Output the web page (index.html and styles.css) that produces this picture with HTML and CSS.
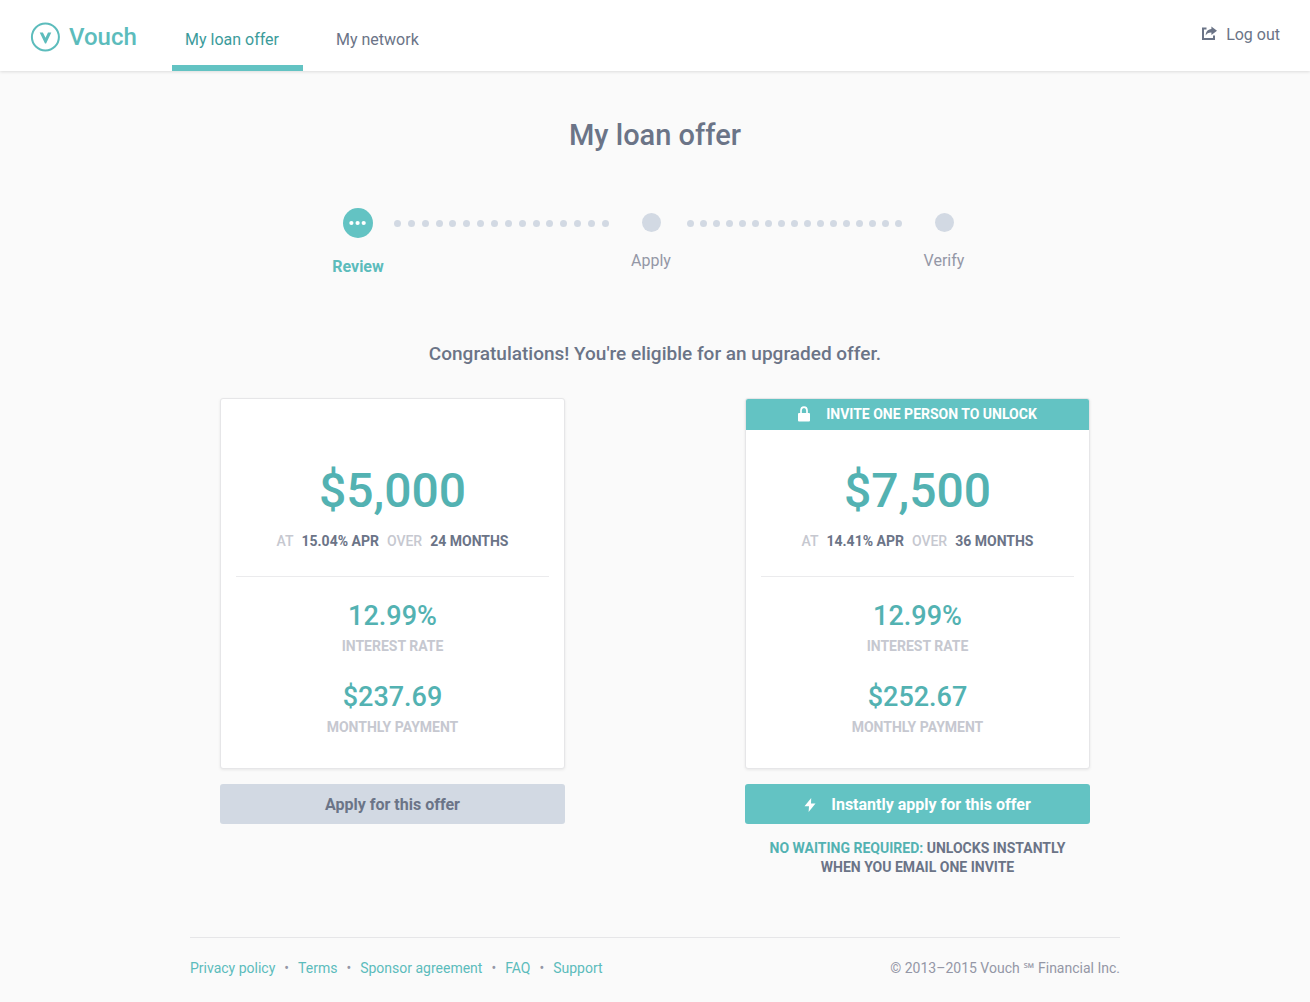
FILE: index.html
```html
<!DOCTYPE html>
<html lang="en">
<head>
<meta charset="utf-8">
<title>Vouch – My loan offer</title>
<meta name="viewport" content="width=device-width, initial-scale=1">
<link rel="stylesheet" href="styles.css">
</head>
<body>
<header class="topbar">
  <a class="brand" href="#">
    <svg class="brand-mark" viewBox="0 0 30 30" aria-hidden="true"><circle cx="15.4" cy="15" r="13.5" fill="none" stroke="currentColor" stroke-width="2"/><path d="M9.7 10.6 H12.9 L15.5 15.8 L18 10.6 H21.3 L16.1 21.5 H15 Z" fill="currentColor"/></svg>
    <span>Vouch</span>
  </a>
  <nav class="tabs">
    <a class="tab tab-active" href="#" aria-current="page">My loan offer</a>
    <a class="tab" href="#">My network</a>
  </nav>
  <a class="logout" href="#">
    <svg class="logout-icon" viewBox="0 0 16 16" aria-hidden="true"><path d="M5.5 3.5 H2 V14 H13 V10.5" fill="none" stroke="currentColor" stroke-width="2"/><path d="M10.4 1.5 L16 5.7 L10.4 9.9 V7.5 C7.6 7.4 5.8 8.5 4.7 10.5 C4.7 6.8 6.6 4.2 10.4 3.9 Z" fill="currentColor"/></svg>
    <span>Log out</span>
  </a>
</header>

<main class="page">
  <h1 class="title">My loan offer</h1>

  <ol class="steps">
    <li class="step step-current" aria-current="step">
      <svg class="step-icon" viewBox="0 0 30 30" aria-hidden="true"><circle cx="15" cy="15" r="15" fill="currentColor"/><g fill="#fff"><circle cx="8.4" cy="15" r="2.1"/><circle cx="14.6" cy="15" r="2.1"/><circle cx="20.7" cy="15" r="2.1"/></g></svg>
      <span>Review</span>
    </li>
    <li class="dots" aria-hidden="true"><i></i><i></i><i></i><i></i><i></i><i></i><i></i><i></i><i></i><i></i><i></i><i></i><i></i><i></i><i></i><i></i></li>
    <li class="step">
      <span class="step-dot"></span>
      <span>Apply</span>
    </li>
    <li class="dots" aria-hidden="true"><i></i><i></i><i></i><i></i><i></i><i></i><i></i><i></i><i></i><i></i><i></i><i></i><i></i><i></i><i></i><i></i><i></i></li>
    <li class="step">
      <span class="step-dot"></span>
      <span>Verify</span>
    </li>
  </ol>

  <h2 class="headline">Congratulations! You're eligible for an upgraded offer.</h2>

  <div class="offers">
    <section class="offer">
      <div class="card">
        <div class="ribbon"></div>
        <div class="card-body">
          <p class="amount">$5,000</p>
          <p class="terms"><span>AT</span> <b>15.04% APR</b> <span>OVER</span> <b>24 MONTHS</b></p>
          <hr class="rule">
          <p class="figure">12.99%</p>
          <p class="caption">INTEREST RATE</p>
          <p class="figure">$237.69</p>
          <p class="caption">MONTHLY PAYMENT</p>
        </div>
      </div>
      <button class="button" type="button">Apply for this offer</button>
    </section>

    <section class="offer">
      <div class="card">
        <div class="ribbon ribbon-locked">
          <svg class="lock-icon" viewBox="0 0 12 16" aria-hidden="true"><path d="M3 7.5 V4.6 A3 3.4 0 0 1 9 4.6 V7.5" fill="none" stroke="currentColor" stroke-width="1.7"/><rect x="0" y="7" width="12" height="8.5" rx="1" fill="currentColor"/></svg>
          <span>INVITE ONE PERSON TO UNLOCK</span>
        </div>
        <div class="card-body">
          <p class="amount">$7,500</p>
          <p class="terms"><span>AT</span> <b>14.41% APR</b> <span>OVER</span> <b>36 MONTHS</b></p>
          <hr class="rule">
          <p class="figure">12.99%</p>
          <p class="caption">INTEREST RATE</p>
          <p class="figure">$252.67</p>
          <p class="caption">MONTHLY PAYMENT</p>
        </div>
      </div>
      <button class="button button-primary" type="button">
        <svg class="bolt-icon" viewBox="0 0 12 16" aria-hidden="true"><path d="M7.2 1 L0.5 9.2 H5 L4.6 15 L11.5 6.6 H7 Z" fill="currentColor"/></svg>
        <span>Instantly apply for this offer</span>
      </button>
      <p class="note"><em>NO WAITING REQUIRED:</em> <span>UNLOCKS INSTANTLY</span> <span>WHEN YOU EMAIL ONE INVITE</span></p>
    </section>
  </div>

  <footer class="footer">
    <ul class="links">
      <li><a href="#">Privacy policy</a></li>
      <li><a href="#">Terms</a></li>
      <li><a href="#">Sponsor agreement</a></li>
      <li><a href="#">FAQ</a></li>
      <li><a href="#">Support</a></li>
    </ul>
    <p class="legal">© 2013–2015 Vouch ℠ Financial Inc.</p>
  </footer>
</main>
</body>
</html>
```

FILE: styles.css
```css
* {
  box-sizing: border-box;
}

body,
h1,
h2,
p,
ol,
ul {
  margin: 0;
  padding: 0;
}

body {
  background: #fafafa;
  color: #6b7487;
  font: 16px/20px Roboto, "Noto Sans", sans-serif;
}

a {
  color: inherit;
  text-decoration: none;
}

ol,
ul {
  list-style: none;
}

.topbar {
  display: flex;
  height: 71px;
  padding: 0 30px;
  background: #fff;
  box-shadow: 0 1px 3px rgba(0, 0, 0, 0.12);
}

.brand {
  display: flex;
  align-items: center;
  gap: 9px;
  width: 142px;
  padding-top: 3px;
  color: #5cbcbc;
  font-size: 24px;
  font-weight: 500;
}

.brand-mark {
  width: 30px;
  height: 30px;
}

.tabs {
  display: flex;
  gap: 20px;
}

.tab {
  padding: 30px 13px 0;
  border-bottom: 6px solid transparent;
}

.tab-active {
  min-width: 131px;
  border-color: #63c3c3;
  color: #3b9b9b;
}

.logout {
  display: flex;
  gap: 9px;
  margin-left: auto;
  padding-top: 25px;
}

.logout-icon {
  width: 16px;
  height: 16px;
}

.page {
  max-width: 930px;
  margin: 0 auto;
}

.title {
  padding-top: 44px;
  font-size: 29px;
  font-weight: 500;
  line-height: 40px;
  text-align: center;
}

.steps {
  display: flex;
  align-items: flex-start;
  max-width: 648px;
  margin: 53px auto 0;
  padding-right: 8px;
}

.step {
  display: flex;
  flex-direction: column;
  align-items: center;
  gap: 19px;
  width: 54px;
  padding-top: 5px;
  color: #9497a6;
}

.step-current {
  padding-top: 0;
  color: #5cbcbc;
  font-weight: 700;
}

.step-icon {
  width: 30px;
  height: 30px;
  color: #63c3c3;
}

.step-dot {
  width: 19px;
  height: 19px;
  border-radius: 50%;
  background: #d2d9e3;
}

.dots {
  display: flex;
  flex: 1;
  justify-content: space-between;
  margin: 12px 15px 0 9px;
}

.dots i {
  width: 7px;
  height: 7px;
  border-radius: 50%;
  background: #d2d9e3;
}

.headline {
  margin-top: 65px;
  font-size: 19px;
  font-weight: 500;
  line-height: 24px;
  text-align: center;
}

.offers {
  display: flex;
  justify-content: space-between;
  gap: 30px;
  padding: 32px 30px 0;
}

.offer {
  flex: 0 1 345px;
  text-align: center;
}

.card {
  overflow: hidden;
  border: 1px solid #e6e6e8;
  border-radius: 3px;
  background: #fff;
  box-shadow: 0 1px 3px rgba(0, 0, 0, 0.08);
}

.ribbon {
  display: flex;
  align-items: center;
  justify-content: center;
  gap: 16px;
  height: 31px;
  padding-bottom: 2px;
  color: #fff;
  font-size: 14px;
  font-weight: 700;
}

.ribbon-locked {
  background: #63c3c3;
}

.lock-icon {
  width: 12px;
  height: 16px;
}

.card-body {
  padding: 31px 15px;
}

.amount {
  color: #53b2b2;
  font-size: 48px;
  font-weight: 500;
  line-height: 60px;
}

.terms {
  display: flex;
  justify-content: center;
  gap: 8px;
  padding-top: 10px;
  color: #c6c8d0;
  font-size: 14px;
  font-weight: 500;
}

.terms b {
  color: #6b7487;
  font-weight: 700;
}

.rule {
  height: 1px;
  margin: 25px 0 23px;
  border: 0;
  background: #ebebed;
}

.figure {
  color: #53b2b2;
  font-size: 27px;
  font-weight: 500;
  line-height: 32px;
}

.caption {
  padding-top: 4px;
  color: #c6c8d0;
  font-size: 14px;
  font-weight: 700;
}

.caption + .figure {
  margin-top: 25px;
}

.button {
  display: flex;
  align-items: center;
  justify-content: center;
  gap: 15px;
  width: 100%;
  height: 40px;
  margin-top: 15px;
  padding-top: 2px;
  border: 0;
  border-radius: 3px;
  background: #d2d9e3;
  color: #6b7487;
  font: inherit;
  font-weight: 700;
}

.button-primary {
  background: #63c3c3;
  color: #fff;
}

.bolt-icon {
  width: 12px;
  height: 16px;
}

.note {
  padding: 15px 10px 0;
  font-size: 14px;
  font-weight: 700;
  line-height: 19px;
}

.note em {
  color: #53b2b2;
  font-style: normal;
}

.footer {
  display: flex;
  justify-content: space-between;
  margin-top: 60px;
  padding: 20px 0 24px;
  border-top: 1px solid #e6e6e8;
  color: #9497a6;
  font-size: 14px;
}

.links {
  display: flex;
}

.links a {
  color: #5cbcbc;
}

.links li + li::before {
  content: "•";
  margin: 0 9px;
}
```
